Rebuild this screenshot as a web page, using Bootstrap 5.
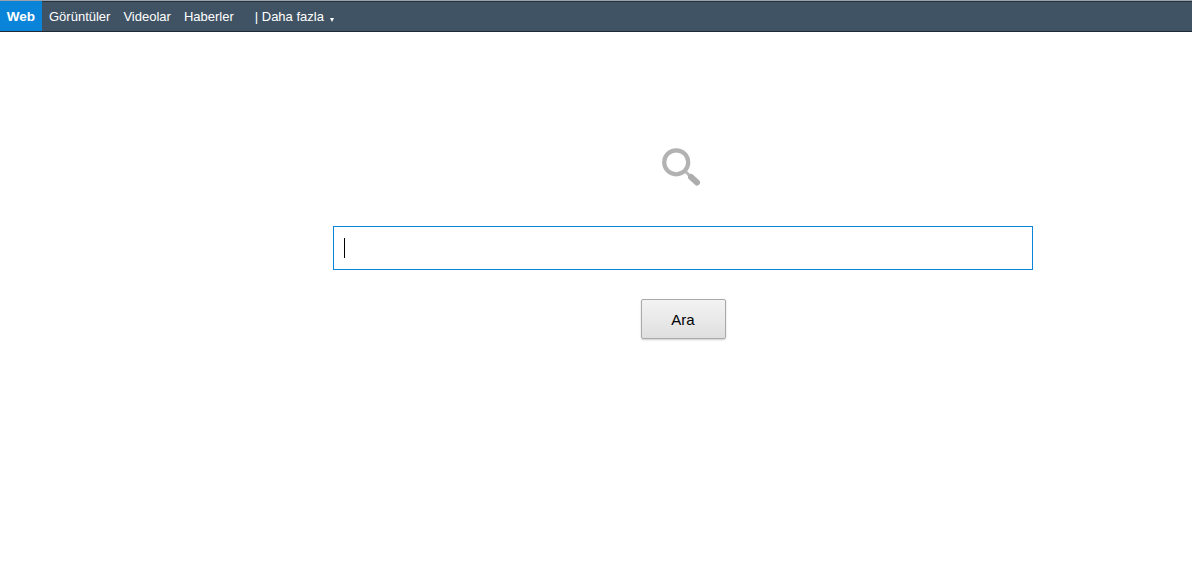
<!DOCTYPE html>
<html lang="tr">
<head>
<meta charset="utf-8">
<title>Ara</title>
<link rel="stylesheet" href="https://cdn.jsdelivr.net/npm/bootstrap@5.3.0/dist/css/bootstrap.min.css">
<style>
html,body{height:100%;background:#fff;overflow:hidden}
body{font-family:"Liberation Sans",Arial,sans-serif;color:#000}
.topstrip{height:32px;background:#3f5364;border-top:1px solid #9aa3aa;border-bottom:1px solid #1f2a33;box-shadow:inset 0 1px 0 #26333e;font-size:13px}
.topstrip a{color:#fff;text-decoration:none;display:block;line-height:31px}
.tab-on{background:#0a84d8;font-weight:700;font-size:13.5px;width:42px;text-align:center}
.tab-one{margin-left:7px}.tab-two{margin-left:13px}.tab-three{margin-left:13px}.tab-four{margin-left:21px}
.caret-mark{display:inline-block;width:0;height:0;border-left:2.5px solid transparent;border-right:2.5px solid transparent;border-top:4px solid #fff;margin-left:2px;vertical-align:-1px}
.search-mark{margin-top:114px;width:42px;height:42px}
.query-box{width:700px;height:44px;border:1px solid #0a84d8;border-radius:0;padding:0 10px;font-size:16px;box-shadow:none!important}
.query-box:focus{border-color:#0a84d8}
.caret-line{position:absolute;left:11px;top:12px;width:1px;height:20px;background:#000}
.query-wrap{width:700px;margin-left:333px;margin-top:38px;height:44px}
.go-btn{width:85px;height:40px;margin-top:29px;margin-left:641px;font-size:15px;color:#000;background:linear-gradient(#f3f3f3,#dfdfdf);border:1px solid #a9a9a9;border-radius:2px;box-shadow:0 1px 2px rgba(0,0,0,.2);padding:3px 1px 0 0}
.go-btn:hover{color:#000;background:linear-gradient(#f3f3f3,#dfdfdf);border-color:#a9a9a9}
.icon-row{padding-left:660px}
</style>
</head>
<body>
<nav class="topstrip d-flex align-items-stretch">
  <a class="tab-on" href="#">Web</a>
  <a class="tab-one" href="#">Görüntüler</a>
  <a class="tab-two" href="#">Videolar</a>
  <a class="tab-three" href="#">Haberler</a>
  <a class="tab-four" href="#">| Daha fazla <span class="caret-mark"></span></a>
</nav>
<main>
  <div class="icon-row">
    <svg class="search-mark d-block" viewBox="0 0 42 42" aria-hidden="true">
      <path d="M26 26 31 31" stroke="#b8b8b8" stroke-width="3"/>
      <path d="M31 31 37 36.5" stroke="#adadad" stroke-width="6" stroke-linecap="round"/>
      <circle cx="16.2" cy="16.3" r="12" fill="#fff" stroke="#b2b2b2" stroke-width="4.2"/>
    </svg>
  </div>
  <div class="query-wrap position-relative">
    <input class="form-control query-box" type="text" aria-label="Ara">
    <span class="caret-line"></span>
  </div>
  <button class="btn go-btn d-block" type="button">Ara</button>
</main>
</body>
</html>
